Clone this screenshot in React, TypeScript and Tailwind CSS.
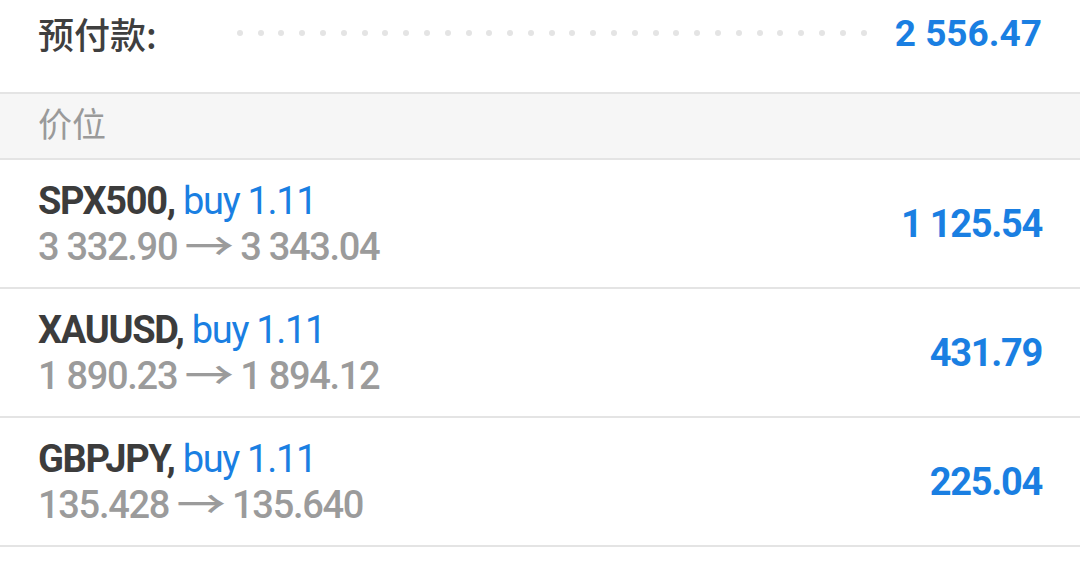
import React from "react";

const rows = [
  { sym: "SPX500", vol: "buy 1.11", from: "3 332.90", to: "3 343.04", val: "1 125.54" },
  { sym: "XAUUSD", vol: "buy 1.11", from: "1 890.23", to: "1 894.12", val: "431.79" },
  { sym: "GBPJPY", vol: "buy 1.11", from: "135.428", to: "135.640", val: "225.04" },
];

export default function App() {
  return (
    <div className="w-[1080px] h-[571px] bg-white overflow-hidden" style={{ fontFamily: "Roboto, 'Noto Sans CJK SC', sans-serif" }}>
      <div className="h-[92px] flex items-start pt-[10px] pl-[38px] pr-[38px]">
        <div className="flex items-center w-full h-[46px]">
          <span className="text-[36px] font-medium text-[#3f3f3f] leading-none" style={{ fontFamily: "'Noto Sans CJK SC', sans-serif" }}>预付款:</span>
          <div className="flex-1 flex justify-between items-center ml-[80px] mr-[28px]">
            {Array.from({ length: 31 }).map((_, i) => (
              <span key={i} className="w-[6px] h-[6px] rounded-full bg-[#e4e4e4]" />
            ))}
          </div>
          <span className="text-[37px] font-bold text-[#1a7fe2] leading-none">2 556.47</span>
        </div>
      </div>
      <div className="h-[68px] border-y-2 border-[#e4e4e4] bg-[#f6f6f6] flex items-center pl-[38px] pb-[6px]">
        <span className="text-[34px] text-[#9a9a9a] leading-none" style={{ fontFamily: "'Noto Sans CJK SC', sans-serif" }}>价位</span>
      </div>
      {rows.map((r) => (
        <div key={r.sym} className="h-[129px] border-b-2 border-[#e4e4e4] flex items-center justify-between pl-[38px] pr-[38px]">
          <div className="flex flex-col">
            <div className="text-[38px] leading-[46px] tracking-[-1.3px]">
              <span className="font-bold text-[#3c3c3c]">{r.sym},</span>{" "}
              <span className="text-[#1a7fe2]">{r.vol}</span>
            </div>
            <div className="text-[38px] leading-[46px] font-medium text-[#9b9b9b] tracking-[-1.3px]">
              {r.from} <span className="inline-block mx-[5px] scale-x-[1.3]">→</span> {r.to}
            </div>
          </div>
          <span className="text-[38px] font-bold text-[#1a7fe2] leading-none tracking-[-1.3px]">{r.val}</span>
        </div>
      ))}
    </div>
  );
}
